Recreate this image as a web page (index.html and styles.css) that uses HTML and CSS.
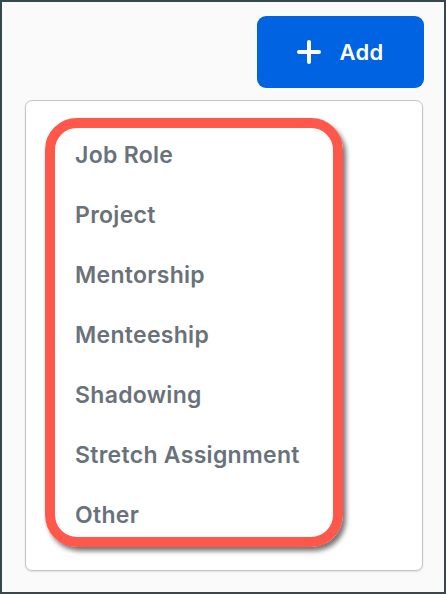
FILE: index.html
```html
<!DOCTYPE html>
<html>
<head>
<meta charset="utf-8">
<link rel="stylesheet" href="styles.css">
</head>
<body>
<div class="frame">
  <div class="toolbar">
    <button class="add-btn">
      <svg class="plus" width="24" height="24" viewBox="0 0 24 24"><path d="M12 2v20M2 12h20" stroke="#fff" stroke-width="4" stroke-linecap="round" fill="none"/></svg>
      <span>Add</span>
    </button>
  </div>
  <div class="card">
    <ul class="menu">
      <li>Job Role</li>
      <li>Project</li>
      <li>Mentorship</li>
      <li>Menteeship</li>
      <li>Shadowing</li>
      <li>Stretch Assignment</li>
      <li>Other</li>
    </ul>
  </div>
</div>
</body>
</html>
```
FILE: styles.css
```css
* { box-sizing: border-box; }
html, body { margin: 0; padding: 0; }
body { font-family: Inter, "Noto Sans", sans-serif; }
.frame {
  width: 446px;
  height: 594px;
  border: 2px solid #37474f;
  background: #fafafa;
  display: flex;
  flex-direction: column;
}
.toolbar {
  display: flex;
  justify-content: flex-end;
  padding: 14px 20px 0 0;
}
.add-btn {
  width: 167px;
  height: 72px;
  border: none;
  border-radius: 9px;
  background: #0063e2;
  color: #fff;
  font-family: Inter, sans-serif;
  font-size: 22px;
  font-weight: 600;
  letter-spacing: 0.3px;
  display: flex;
  align-items: center;
  justify-content: center;
  gap: 18px;
  padding: 0;
}
.plus { display: block; }
.card {
  margin: 12px 21px 0 23px;
  background: #fff;
  border: 1px solid #c3c7cb;
  border-radius: 7px;
  box-shadow: 0 1px 2px rgba(0,0,0,0.12);
  padding: 17px 0 23px 19px;
}
.menu {
  list-style: none;
  margin: 0;
  width: 298px;
  height: 429px;
  border: 10px solid #ff584b;
  border-radius: 32px;
  box-shadow: 3px 4px 5px rgba(0,0,0,0.55);
  padding: 12px 0 0 20px;
  display: flex;
  flex-direction: column;
  gap: 30px;
}
.menu li {
  font-size: 23px;
  line-height: 30px;
  font-weight: 600;
  letter-spacing: 0.3px;
  color: #69727b;
  white-space: nowrap;
}
```
